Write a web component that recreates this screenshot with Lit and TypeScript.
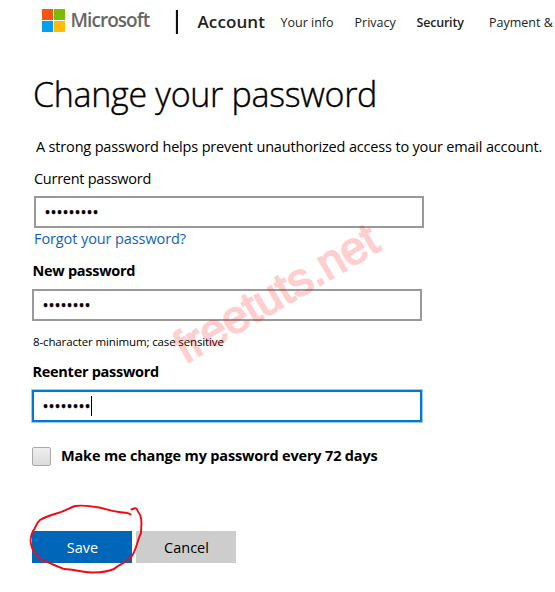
import { LitElement, html, css } from "lit";
import { customElement } from "lit/decorators.js";

@customElement("app-root")
class AppRoot extends LitElement {
  static styles = css`
    :host {
      display: block;
      position: relative;
      width: 555px;
      height: 592px;
      overflow: hidden;
      background: #fff;
      color: #000;
      font: 14.5px/20px "Open Sans", "Noto Sans", sans-serif;
      white-space: nowrap;
    }
    header { display: flex; align-items: flex-start; height: 74px; padding-left: 42px; box-sizing: border-box; color: #222; }
    .logo { width: 23px; height: 23px; margin-top: 9px; flex: none; }
    .brand { width: 105px; margin: 10px 0 0 5.5px; font-size: 19px; font-weight: 600; letter-spacing: -0.95px; color: #666; flex: none; }
    .divider { width: 2px; height: 24px; margin-top: 10px; background: #111; flex: none; box-shadow: -1px 0 #ffdcb0; }
    .account { width: 83px; margin: 12px 0 0 20px; font-size: 17px; font-weight: 600; letter-spacing: 0.1px; flex: none; }
    nav { display: flex; margin-top: 13px; font-size: 12.5px; }
    .info { width: 74px; }
    .privacy { width: 62px; }
    .security { width: 72.500px; font-weight: 600; letter-spacing: -0.2px; }
    h1 { margin: 0 0 23px 33px; font-size: 34px; line-height: 40px; font-weight: 300; letter-spacing: -0.3px; -webkit-text-stroke: 0.4px #000; }
    p { margin: 0 0 12px 36px; letter-spacing: -0.17px; }
    .current { padding-left: 34px; }
    .current label { display: block; letter-spacing: -0.27px; margin-bottom: 7px; }
    .current a { display: block; padding-top: 1px; color: #1062b9; letter-spacing: -0.1px; }
    .fresh { padding-left: 32px; margin-top: 12px; }
    .fresh .title { display: block; font-weight: 700; letter-spacing: -0.28px; margin-bottom: 8px; padding-left: 0.5px; }
    .field {
      display: flex; align-items: center; box-sizing: border-box; width: 390px; height: 32px;
      border: 2px solid #999; padding-left: 8.500px; font-size: 16px; letter-spacing: -0.01px;
      -webkit-text-stroke: 0.3px #000;
    }
    .active { border-color: #0078d7; box-shadow: 0 0 0 1px #a0c8fa; }
    .caret { width: 1px; height: 20px; background: #000; }
    .hint { margin: 11px 0 10px 1px; font-size: 11.5px; letter-spacing: -0.13px; }
    .check { display: flex; align-items: center; gap: 10px; margin: 24px 0 65px 32px; height: 20px; font-weight: 700; letter-spacing: -0.17px; line-height: 22px; }
    .box { box-sizing: border-box; width: 19px; height: 19px; border: 1px solid #aaa; border-radius: 2px; background: linear-gradient(#eee, #dcdcdc); }
    .actions { display: flex; gap: 4px; padding-left: 32px; }
    .button { width: 100px; height: 32px; line-height: 33px; text-align: center; background: #cdcdcd; text-indent: 1px; }
    .save { background: #0067b8; color: #fff; }
    .watermark {
      position: absolute; left: 186px; top: 325px; font: 46px/46px "Liberation Sans", Arial, sans-serif;
      letter-spacing: -0.2px;
      color: #f00; -webkit-text-stroke: 1.8px #f00; opacity: 0.19; transform: rotate(-30.3deg); transform-origin: 0 40px;
    }
    .pen { position: absolute; left: 0; top: 490px; }
  `;

  render() {
    return html`
      <header>
        <svg class="logo" viewBox="0 0 23 23">
          <path fill="#f65314" d="M0 0h11v11H0z" />
          <path fill="#7cbb00" d="M12 0h11v11H12z" />
          <path fill="#00a1f1" d="M0 12h11v11H0z" />
          <path fill="#ffbb00" d="M12 12h11v11H12z" />
        </svg>
        <span class="brand">Microsoft</span>
        <span class="divider"></span>
        <span class="account">Account</span>
        <nav>
          <span class="info">Your info</span>
          <span class="privacy">Privacy</span>
          <span class="security">Security</span>
          <span>Payment &amp;</span>
        </nav>
      </header>
      <h1>Change your password</h1>
      <p>A strong password helps prevent unauthorized access to your email account.</p>
      <div class="current">
        <label>Current password</label>
        <div class="field">${"•".repeat(9)}</div>
        <a>Forgot your password?</a>
      </div>
      <div class="fresh">
        <label class="title">New password</label>
        <div class="field">${"•".repeat(8)}</div>
        <div class="hint">8-character minimum; case sensitive</div>
        <label class="title">Reenter password</label>
        <div class="field active">${"•".repeat(8)}<span class="caret"></span></div>
      </div>
      <div class="check"><span class="box"></span>Make me change my password every 72 days</div>
      <div class="actions">
        <div class="button save">Save</div>
        <div class="button">Cancel</div>
      </div>
      <div class="watermark">freetuts.net</div>
      <svg class="pen" width="250" height="100" viewBox="0 0 250 100" fill="none" stroke="#f00a14" stroke-width="1.9" stroke-linecap="round" stroke-linejoin="round">
        <path d="M130.500 24.500C127 21.500 122 23 119 22C111 21 105 18.500 99 17.500C91 16 82 15 75 16C69 18 65 21 58 23C51 25 45 27 40 30C36 33 36 38 33 41C31 45 30 50 31 54C32 60 37 66 42 70C49 73 57 76 64 79C75 79 82 83 94 82.500C102 82.500 109 81 114 79C119 74 126 73 131 67C136 62 137 51 141 43C141 36 143 28 139 23C137 22 138 17 134 18.500L131.500 19.500" />
      </svg>
    `;
  }
}
